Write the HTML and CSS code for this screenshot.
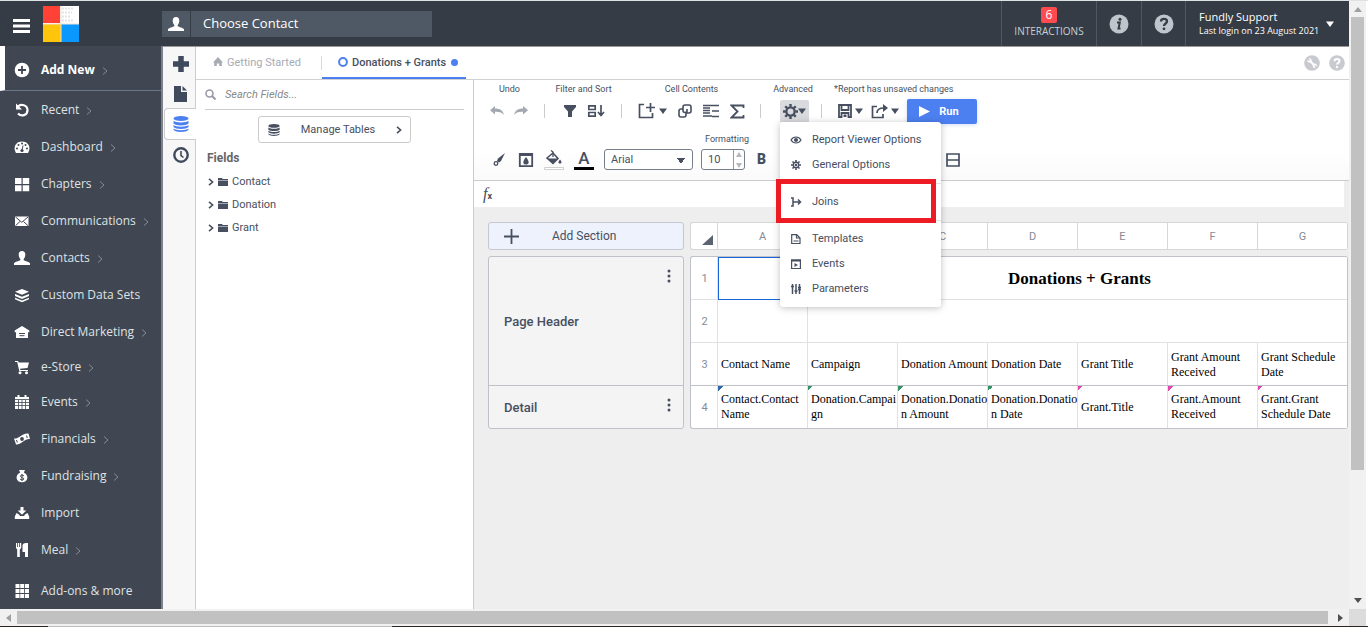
FILE: index.html
```html
<!DOCTYPE html>
<html lang="en">
<head>
<meta charset="utf-8">
<meta name="viewport" content="width=device-width, initial-scale=1">
<title>Donations + Grants</title>
<link rel="stylesheet" href="styles.css">
</head>
<body>
<svg class="sprite" aria-hidden="true">
  <symbol id="person" viewBox="0 0 16 14"><path d="M8 0c2.200 0 3.400 1.500 3.300 3.700C11.200 5.700 10.300 7.300 9.700 8v1.300c1.300.9 5.300 1.300 6.300 3V14H0v-1.700c1-1.700 5-2.100 6.300-3V8C5.700 7.300 4.800 5.700 4.700 3.700 4.600 1.500 5.800 0 8 0z"/></symbol>
  <symbol id="database" viewBox="0 0 16 16"><ellipse cx="8" cy="2.500" rx="7.500" ry="2.500"/><path d="M.5 4.800C3 7 13 7 15.500 4.800v2.700c-2 2.500-13 2.500-15 0zM.5 9C3 11.200 13 11.200 15.500 9v2c-2 2.500-13 2.500-15 0zM.5 12.600c2.500 2.200 12.500 2.200 15 0v1.100c-2 2.900-13 2.900-15 0z"/></symbol>
  <symbol id="chev" viewBox="0 0 6 8"><path d="M1 .8 4.600 4 1 7.200" fill="none" stroke="currentColor" stroke-width="1.600"/></symbol>
  <symbol id="thin" viewBox="0 0 6 8"><path d="M1 .5 5 4 1 7.500" fill="none" stroke="currentColor"/></symbol>
  <symbol id="caret" viewBox="0 0 8 6"><path d="M0 .5h8L4 6z"/></symbol>
  <symbol id="folder" viewBox="0 0 10 8"><path d="M0 0h4l.7 1H10v1H0zM0 2.600h10V8H0z"/></symbol>
  <symbol id="undo" viewBox="0 0 14 10"><path d="M5 0v2.500c5 0 8 2 9 6.500-2-3-5-3.500-9-3.300V8.500L0 4.200z"/></symbol>
  <symbol id="gear" viewBox="0 0 16 16"><circle cx="8" cy="8" r="4.400" fill="none" stroke="currentColor" stroke-width="2.400"/><path d="M8 0v3M8 13v3M0 8h3M13 8h3M2.400 2.400l2 2M11.600 11.600l2 2M2.400 13.600l2-2M11.600 4.400l2-2" stroke="currentColor" stroke-width="2.600"/></symbol>
  <symbol id="dots" viewBox="0 0 4 14"><circle cx="2" cy="2" r="1.500"/><circle cx="2" cy="7" r="1.500"/><circle cx="2" cy="12" r="1.500"/></symbol>
</svg>
<div class="window">
  <div class="viewport">
    <header class="topbar">
      <button class="plain burger" aria-label="Menu"><svg width="17" height="14"><path d="M0 1.500h17M0 7h17M0 12.500h17" stroke="#fff" stroke-width="3"/></svg></button>
      <a href="#" class="logo" aria-label="Home"><svg width="36" height="36"><rect width="36" height="36" fill="#fff"/><rect width="17" height="17" fill="#ff4136"/><rect y="18" width="18" height="18" fill="#ffc50a"/><rect x="18" y="18" width="18" height="18" fill="#0a98ff"/><path d="M19 2.500h12M19 6.500h10M19 10.500h8M19 14.500h12" stroke="#e4e4e4" stroke-width="2" stroke-dasharray="2 1"/><path d="M18 0v36M0 18h36" stroke="#f4dfcf"/></svg></a>
      <div class="chooser">
        <span class="chooser-icon"><svg width="16" height="14"><use href="#person"/></svg></span>
        <input type="text" placeholder="Choose Contact" aria-label="Choose Contact">
      </div>
      <a href="#" class="interactions"><span class="badge">6</span>INTERACTIONS</a>
      <button class="plain top-icon" aria-label="Information"><svg width="20" height="20" viewBox="0 0 20 20"><circle cx="10" cy="10" r="9.500" fill="#bfc5cc"/><circle cx="11" cy="5.200" r="1.500" fill="#353c45"/><path d="M8 8.500h2.800L9.500 14.500h2" fill="none" stroke="#353c45" stroke-width="2"/></svg></button>
      <button class="plain top-icon help" aria-label="Help"><svg width="20" height="20" viewBox="0 0 20 20"><circle cx="10" cy="10" r="9.500" fill="#bfc5cc"/><path d="M7 7.500C7 4 13 4 13 7.500c0 2-3 2-3 4.500" fill="none" stroke="#353c45" stroke-width="2.300"/><circle cx="10" cy="14.800" r="1.400" fill="#353c45"/></svg></button>
      <button class="plain account"><span>Fundly Support<small>Last login on 23 August 2021</small></span><svg width="8" height="6"><use href="#caret"/></svg></button>
    </header>
    <div class="body">
      <nav class="sidebar">
        <a href="#" class="add-new"><svg width="16" height="16" viewBox="0 0 16 16"><circle cx="8" cy="8" r="7.300"/><path d="M8 4v8M4 8h8" stroke="#404752" stroke-width="1.800"/></svg>Add New<svg class="more" width="6" height="8"><use href="#thin"/></svg></a>
        <a href="#"><svg width="16" height="16" viewBox="0 0 16 16"><path d="M4 4.500C7 1.500 13.500 3 13.500 8.300c0 5-6 6.700-9.500 3.200" fill="none" stroke="#fff" stroke-width="2.200"/><path d="M2 1.500v6h6z"/></svg>Recent<svg class="more" width="6" height="8"><use href="#thin"/></svg></a>
        <a href="#"><svg width="16" height="16" viewBox="0 0 16 16"><path d="M2 14C-1.500 8 2 2.500 8 2.500S17.500 8 14 14z"/><g fill="#404752"><circle cx="3" cy="9.500" r="1"/><circle cx="4.500" cy="6" r="1"/><circle cx="8" cy="4.500" r="1"/><circle cx="11.500" cy="6" r="1"/><circle cx="13" cy="9.500" r="1"/><circle cx="8" cy="11.500" r="1.600"/></g><path d="m8 11.500 1-5" stroke="#404752"/></svg>Dashboard<svg class="more" width="6" height="8"><use href="#thin"/></svg></a>
        <a href="#"><svg width="16" height="16" viewBox="0 0 16 16"><path d="M1 2h6.500v6H1zM8.700 2h6.500v6H8.700zM1 9.200h6.500v6H1zM8.700 9.200h6.500v6H8.700z"/></svg>Chapters<svg class="more" width="6" height="8"><use href="#thin"/></svg></a>
        <a href="#"><svg width="16" height="16" viewBox="0 0 16 16"><path d="M1 3.500h13.500v9.500H1z"/><path d="m1.500 4 6.300 5.300L14 4M1.500 12.700 6 8.500m8 4.200L9.500 8.500" fill="none" stroke="#404752"/></svg>Communications<svg class="more" width="6" height="8"><use href="#thin"/></svg></a>
        <a href="#"><svg width="16" height="14"><use href="#person"/></svg>Contacts<svg class="more" width="6" height="8"><use href="#thin"/></svg></a>
        <a href="#"><svg width="16" height="16" viewBox="0 0 16 16"><path d="m8 2 7 2.800-7 3-7-3zM1 7l7 2.800L15 7v2l-7 3-7-3zM1 10.700l7 2.800 7-2.800v1.500l-7 3-7-3z"/></svg>Custom Data Sets</a>
        <a href="#"><svg width="16" height="16" viewBox="0 0 16 16"><path d="m8 2 7.300 4.500v1.800H14V14H2V8.300H.7V6.500z"/><path d="M5 9.500h6M5.500 11.700h5" stroke="#404752"/></svg>Direct Marketing<svg class="more" width="6" height="8"><use href="#thin"/></svg></a>
        <a href="#" class="compact"><svg width="16" height="16" viewBox="0 0 16 16"><path d="M1 2h3l.7 1.500H15L13.500 9l-7.500.8.3 1.200H14v1H5.300L3.200 3H1z"/><circle cx="6" cy="13.800" r="1.500"/><circle cx="12.500" cy="13.800" r="1.500"/></svg>e-Store<svg class="more" width="6" height="8"><use href="#thin"/></svg></a>
        <a href="#"><svg width="16" height="16" viewBox="0 0 16 16"><path d="M1 3h2.500V1h2v2h5V1h2v2H15v12H1z"/><path d="M1 5.500h14M1 8.500h14M1 11.500h14M4.500 6v9M8 6v9M11.500 6v9" stroke="#404752" stroke-width=".8"/></svg>Events<svg class="more" width="6" height="8"><use href="#thin"/></svg></a>
        <a href="#"><svg width="16" height="16" viewBox="0 0 16 16"><path d="M0 7.500C5 8 9 1.500 14.500 2.500L16 8C10.500 7.500 7 14 2 13.500z"/><circle cx="8" cy="8" r="1.900" fill="#404752"/><path d="m2.500 9 .8 2.500M12.500 4.500l.8 2.500" stroke="#404752"/></svg>Financials<svg class="more" width="6" height="8"><use href="#thin"/></svg></a>
        <a href="#"><svg width="16" height="16" viewBox="0 0 16 16"><path d="M5 2h6L9.800 4.500c6 3 4 9.800-1.800 9.800S.200 7.500 6.200 4.500z"/><path d="M10 8C8.500 6.500 6 7 6.500 8.500S10 9.500 9.800 11 7 12 6 11M8 6v7" fill="none" stroke="#404752"/></svg>Fundraising<svg class="more" width="6" height="8"><use href="#thin"/></svg></a>
        <a href="#"><svg width="16" height="16" viewBox="0 0 16 16"><path d="M6.500 2h3v3.500h2.800L8 9.800 3.700 5.500h2.800zM2.500 8 5 9.500 6 11h4l1-1.500L13.500 8l1.700 3.500V14H.800v-2.500z"/></svg>Import</a>
        <a href="#"><svg width="16" height="16" viewBox="0 0 16 16"><path d="M2 1h1.200v4h.8V1h1.200v4H6V1h1.200v5L5.800 7.500V15H3.200V7.500L2 6zM8.500 3c1-2 2.500-2 5.500-2v14h-3v-5H8.500z"/></svg>Meal<svg class="more" width="6" height="8"><use href="#thin"/></svg></a>
        <a href="#" class="addons"><svg width="16" height="16" viewBox="0 0 16 16"><path d="M3.500 1v14M8.200 1v14M13 1v14" stroke="#fff" stroke-width="4" stroke-dasharray="4 1"/></svg>Add-ons &amp; more</a>
      </nav>
      <div class="rail">
        <button class="plain" aria-label="New"><svg width="16" height="16"><path d="M8 0v16M0 8h16" stroke="currentColor" stroke-width="5.500"/></svg></button>
        <button class="plain" aria-label="Reports"><svg width="13" height="16"><path d="M0 0h7v6h6v10H0z"/><path d="M8.500 0v4.500H13z"/></svg></button>
        <button class="plain active" aria-label="Data"><svg width="16" height="16"><use href="#database"/></svg></button>
        <button class="plain" aria-label="Schedule"><svg width="16" height="16"><circle cx="8" cy="8" r="6.700" fill="none" stroke="currentColor" stroke-width="2.400"/><path d="M8 4v4.500l2.500 2" fill="none" stroke="currentColor" stroke-width="1.600"/></svg></button>
      </div>
      <div class="app">
        <div class="tabs">
          <button class="plain tab started"><svg width="10" height="10"><path d="m5 0 5 5.500H8.800V9H6.200V6.500H3.800V9H1.200V5.500H0z"/></svg>Getting Started</button>
          <button class="plain tab current"><svg width="10" height="10"><circle cx="5" cy="5" r="3.900" fill="none" stroke="#4c7ff0" stroke-width="2"/></svg>Donations + Grants<span class="unsaved"></span></button>
          <div class="tab-tools">
            <button class="plain" aria-label="Settings"><svg width="16" height="16"><circle cx="8" cy="8" r="7.800"/><path d="m6 6 4.500 4.500" stroke="#fff" stroke-width="2"/><circle cx="5.500" cy="5.500" r="2.200" fill="#fff"/><circle cx="10.800" cy="10.800" r="2.200" fill="#fff"/><path d="M3 3l2.500 2.500M13 13l-2.200-2.200" stroke="#c8cad0" stroke-width="1.500"/></svg></button>
            <button class="plain" aria-label="Help"><svg width="16" height="16"><circle cx="8" cy="8" r="7.800"/><path d="M5.500 6.200c0-3 5-3 5 0 0 1.700-2.500 1.700-2.500 3.300" fill="none" stroke="#fff" stroke-width="2"/><circle cx="8" cy="12" r="1.200" fill="#fff"/></svg></button>
          </div>
        </div>
        <div class="workspace">
          <aside class="fields">
            <label class="search"><svg width="11" height="11"><circle cx="4.500" cy="4.500" r="3.500" fill="none" stroke="currentColor" stroke-width="1.600"/><path d="m7 7 3.500 3.500" stroke="currentColor" stroke-width="2"/></svg><input type="text" placeholder="Search Fields..." aria-label="Search Fields"></label>
            <button class="manage"><svg width="12" height="12"><use href="#database"/></svg><span>Manage Tables</span><svg width="6" height="8"><use href="#chev"/></svg></button>
            <h2>Fields</h2>
            <ul>
              <li><svg width="6" height="8"><use href="#chev"/></svg><svg width="10" height="8"><use href="#folder"/></svg>Contact</li>
              <li><svg width="6" height="8"><use href="#chev"/></svg><svg width="10" height="8"><use href="#folder"/></svg>Donation</li>
              <li><svg width="6" height="8"><use href="#chev"/></svg><svg width="10" height="8"><use href="#folder"/></svg>Grant</li>
            </ul>
          </aside>
          <main class="designer">
            <div class="toolbar">
              <div class="tools">
                <div class="group undo"><span>Undo</span><div class="icons">
                  <button class="plain" aria-label="Undo"><svg width="14" height="10"><use href="#undo"/></svg></button>
                  <button class="plain" aria-label="Redo"><svg width="14" height="10" viewBox="0 0 14 10"><path d="M9 0v2.500c-5 0-8 2-9 6.500 2-3 5-3.500 9-3.300V8.500l5-4.300z"/></svg></button>
                </div></div>
                <div class="group filter"><span>Filter and Sort</span><div class="icons">
                  <button class="plain" aria-label="Filter"><svg width="14" height="14"><path d="M1 1h12v2L9 7.500V13H5V7.500L1 3z"/></svg></button>
                  <button class="plain" aria-label="Sort"><svg width="18" height="14"><path d="M1.800 1.800h6.400v3.700H1.800zM1.800 8.500h6.400v3.700H1.800zM14 1v10m-3-3 3 3.500L17 8" fill="none" stroke="currentColor" stroke-width="1.700"/></svg></button>
                </div></div>
                <div class="group cell"><span>Cell Contents</span><div class="icons">
                  <button class="plain drop" aria-label="Insert"><svg width="18" height="16"><path d="M6 1.500H1.500v13h13V10M12.500 0v9M8 4.500h9" fill="none" stroke="currentColor" stroke-width="1.700"/></svg><svg width="8" height="6"><use href="#caret"/></svg></button>
                  <button class="plain" aria-label="Merge"><svg width="14" height="14"><path d="M5.500 5H3Q1 5 1 7v4q0 2 2 2h3q2 0 2-2V7.500M8.500 9H11q2 0 2-2V3q0-2-2-2H7Q5 1 5 3v3.500q0 2 2 2h2V5" fill="none" stroke="currentColor" stroke-width="1.600"/></svg></button>
                  <button class="plain" aria-label="Suppress"><svg width="16" height="14"><path d="M0 1.500h9M0 4h7M0 6.500h7M0 9h7M0 12h9M9 1.500h7M9 7h7M9 12.500h7" stroke="currentColor" stroke-width="1.600"/></svg></button>
                  <button class="plain" aria-label="Sum"><svg width="15" height="15"><path d="M13.500 4V1.500h-12l6 6-6 6h12V11" fill="none" stroke="currentColor" stroke-width="1.800"/></svg></button>
                </div></div>
                <div class="group advanced"><span>Advanced</span><div class="icons">
                  <button class="plain gear" aria-label="Advanced"><svg width="15" height="15"><use href="#gear"/></svg><svg width="8" height="6"><use href="#caret"/></svg></button>
                  <div class="menu" role="menu">
                    <button class="plain" role="menuitem"><svg width="12" height="12"><path d="M1 6c2.500-4 7.500-4 10 0-2.500 4-7.500 4-10 0z" fill="none" stroke="currentColor" stroke-width="1.200"/><circle cx="6" cy="6" r="2"/></svg>Report Viewer Options</button>
                    <button class="plain" role="menuitem"><svg width="10" height="10"><use href="#gear"/><circle cx="5" cy="5" r="1.200"/></svg>General Options</button>
                    <hr>
                    <button class="plain" role="menuitem"><svg width="12" height="12"><path d="M1 2h2v8H1M3 6h7M8 3.500 10.500 6 8 8.500" fill="none" stroke="currentColor" stroke-width="1.500"/></svg>Joins</button>
                    <hr>
                    <button class="plain" role="menuitem"><svg width="12" height="12"><path d="M1.700 1.700h5L10 5v5.500H1.700zM6.500 2v3H10M3.500 8h5" fill="none" stroke="currentColor" stroke-width="1.200"/></svg>Templates</button>
                    <button class="plain" role="menuitem"><svg width="12" height="12"><path d="M1.600 2h8.800v8.500H1.600z" fill="none" stroke="currentColor" stroke-width="1.200"/><path d="M1 1.500h10v2H1zM4.500 5v4L8 7z"/></svg>Events</button>
                    <button class="plain" role="menuitem"><svg width="12" height="12"><path d="M2.500 1v10M6 1v10M9.500 1v10M1 3.500h3M4.500 8h3M8 4.500h3M8 6.500h3" stroke="currentColor" stroke-width="1.500"/></svg>Parameters</button>
                    <div class="highlight"></div>
                  </div>
                </div></div>
                <div class="group file"><span>*Report has unsaved changes</span><div class="icons">
                  <button class="plain drop" aria-label="Save"><svg width="14" height="14"><path d="M1 13V1h12v12h-2.500V9h-7v4zM3.500 1v5h7V1" fill="none" stroke="currentColor" stroke-width="1.800"/><path d="M5.500 10.500h3V13h-3z"/></svg><svg width="8" height="6"><use href="#caret"/></svg></button>
                  <button class="plain drop" aria-label="Export"><svg width="17" height="15"><path d="M6 2.500H1.500v11H12V10M6 9c0-4 3-5 7-5" fill="none" stroke="currentColor" stroke-width="1.700"/><path d="m12 0 5 4-5 4z"/></svg><svg width="8" height="6"><use href="#caret"/></svg></button>
                  <button class="plain run"><svg width="11" height="11"><path d="M0 0l11 5.500L0 11z"/></svg>Run</button>
                </div></div>
              </div>
              <div class="formatting"><span>Formatting</span><div class="icons">
                <button class="plain" aria-label="Brush"><svg width="14" height="14"><path d="M13 0 6 5.500 5 8l2 1.500L9 8z"/><circle cx="4" cy="10.500" r="1.800" fill="none" stroke="currentColor" stroke-width="1.300"/><path d="M1 13.500 3 11.500"/></svg></button>
                <button class="plain" aria-label="Background"><svg width="16" height="16"><path d="M1.800 1.800h12.400v12.400H1.800z" fill="none" stroke="currentColor" stroke-width="1.800"/><path d="M1 1h14v3H1zM8 5c4 5 3 7.500 0 7.500S4 10 8 5z"/></svg></button>
                <button class="plain" aria-label="Fill colour"><svg width="20" height="20"><path d="m3 8 6-5 5 5.500-5 5z" fill="none" stroke="currentColor" stroke-width="1.600"/><path d="M3 8.500h11l-5 5zM16 9.500c2.500 3 1.500 4 0 4s-2.500-1 0-4z"/><path d="M9 7V2L7 .5" fill="none" stroke="currentColor" stroke-width="1.300"/><path d="M.5 17.500h19v2H.5z" fill="#fff" stroke="#d0d0d0"/></svg></button>
                <button class="plain letter" aria-label="Text colour">A</button>
                <select aria-label="Font"><option>Arial</option></select>
                <span class="stepper"><input type="text" value="10" aria-label="Font size"><svg width="8" height="18"><path d="M1 6h6L4 1zM1 12h6l-3 5z"/></svg></span>
                <button class="plain bold" aria-label="Bold">B</button>
                <button class="plain borders" aria-label="Borders"><svg width="14" height="14"><path d="M1 1h12v12H1zM1 7h12" fill="none" stroke="currentColor" stroke-width="1.700"/></svg></button>
              </div></div>
            </div>
            <div class="formula"><i>f</i><b>x</b></div>
            <div class="canvas">
              <button class="add-section"><svg width="15" height="15"><path d="M7.500 0v15M0 7.500h15" stroke="currentColor" stroke-width="1.800"/></svg><span>Add Section</span></button>
              <div class="columns"><span class="corner"><svg width="11" height="10"><path d="M11 0v10H0z"/></svg></span><span>A</span><span>B</span><span>C</span><span>D</span><span>E</span><span>F</span><span>G</span></div>
              <div class="sections">
                <div class="section page-header">Page Header<button class="plain" aria-label="Page Header options"><svg width="4" height="14"><use href="#dots"/></svg></button></div>
                <div class="section">Detail<button class="plain" aria-label="Detail options"><svg width="4" height="14"><use href="#dots"/></svg></button></div>
              </div>
              <div class="sheet"><table>
                <tr><th>1</th><td class="selected"></td><td colspan="6" class="title">Donations + Grants</td></tr>
                <tr><th>2</th><td></td><td colspan="6"></td></tr>
                <tr class="last"><th>3</th><td>Contact Name</td><td>Campaign</td><td class="tight">Donation Amount</td><td>Donation Date</td><td>Grant Title</td><td>Grant Amount Received</td><td>Grant Schedule Date</td></tr>
                <tr class="detail"><th>4</th><td class="blue">Contact.Contact Name</td><td class="green">Donation.Campaign</td><td class="green">Donation.Donation Amount</td><td class="green">Donation.Donation Date</td><td class="pink">Grant.Title</td><td class="pink">Grant.Amount Received</td><td class="pink">Grant.Grant Schedule Date</td></tr>
              </table></div>
            </div>
          </main>
        </div>
      </div>
    </div>
  </div>
  <div class="vbar"><svg width="8" height="5"><path d="M0 5h8L4 0z" fill="#a0a0a0"/></svg><div class="vthumb"></div><svg width="8" height="5"><path d="M0 0h8L4 5z"/></svg></div>
  <div class="hbar"><svg width="5" height="8"><path d="M5 0v8L0 4z" fill="#a0a0a0"/></svg><div class="hthumb"></div><svg width="5" height="8"><path d="M0 0v8l5-4z"/></svg></div>
  <div class="scroll-corner"></div>
</div>
</body>
</html>
```
FILE: styles.css
```css
* { box-sizing: border-box; }
body { margin: 0; font: 11px/15px Roboto, sans-serif; color: #474f60; background: #fff; }
svg { display: block; fill: currentColor; flex: none; }
a { color: inherit; text-decoration: none; }
input, button, select { font: inherit; color: inherit; }
.plain { border: 0; padding: 0; background: none; }
.sprite { display: none; }

.window { display: grid; grid-template: minmax(0, 1fr) 17px / minmax(0, 1fr) 17px; height: 100vh; padding: 0 2px 1px 0; border-top: 1px solid #dce3e2; background: linear-gradient(90deg, #2b2420 48px, #bbb 48px, #bbb 392px, #2b2420 392px) bottom / 100% 1px no-repeat; }
.viewport { display: flex; flex-direction: column; min-width: 0; min-height: 0; overflow: hidden; }

.topbar { display: flex; align-items: center; flex: none; height: 45px; background: #353c45; color: #fff; font-family: "Open Sans", sans-serif; }
.burger { width: 43px; padding: 4px 0 0 13px; }
.logo { width: 119px; }
.chooser { display: flex; gap: 1px; width: 270px; height: 26px; }
.chooser-icon { display: grid; place-items: center; width: 28px; background: #4e5965; }
.chooser input { flex: 1; min-width: 0; border: 0; padding: 0 12px; background: #4e5965; font-size: 13px; }
.chooser input::placeholder { color: #fff; opacity: 1; }
.interactions { display: flex; flex-direction: column; align-items: center; justify-content: center; width: 95px; height: 100%; margin-left: auto; border-left: 1px solid #4e5762; font-size: 10px; line-height: 17px; color: #c9ced4; }
.badge { width: 16px; height: 16px; border-radius: 2px; background: #ff4a4f; color: #fff; font-size: 12px; line-height: 16px; text-align: center; }
.top-icon { display: grid; place-items: center; width: 45px; height: 100%; border-left: 1px solid #4e5762; }
.help { width: 44px; }
.account { display: flex; align-items: center; justify-content: space-between; width: 164px; height: 100%; padding: 0 15px 0 13px; border-left: 1px solid #4e5762; text-align: left; line-height: 14px; white-space: nowrap; }
.account small { display: block; font-size: 9px; line-height: 13px; }

.body { display: flex; flex: 1; min-height: 0; }
.sidebar { display: flex; flex-direction: column; flex: none; width: 163px; border-right: 2px solid #7d828a; background: #404752; color: #dfe2e6; font: 12px/16px "Open Sans", sans-serif; }
.sidebar a { display: flex; align-items: center; flex: none; gap: 11px; height: 37px; padding-left: 14px; }
.sidebar svg { color: #fff; }
.sidebar .more { margin: 3px 0 0 -4px; color: #858c95; }
.sidebar .add-new { height: 45px; padding: 3px 0 0 9px; border-left: 5px solid #fff; border-bottom: 1px solid #68758b; color: #fff; font-weight: 700; }
.sidebar .compact { height: 33px; }
.sidebar .addons { margin-top: 4px; }

.rail { display: flex; flex-direction: column; flex: none; width: 33px; padding: 1px 0 0 1px; border-top: 1px solid #999; background: linear-gradient(#ccc, #ccc) right / 1px 100% no-repeat #f7f7f7; }
.rail button { display: grid; place-items: center; height: 31px; padding-left: 1px; color: #404a5d; }
.rail button:nth-child(2) { height: 29px; }
.rail .active { height: 32px; border: 1px solid #ccc; border-right: 0; border-radius: 4px 0 0 4px; background: #fff; color: #4c7ff0; }
.rail button:last-child { height: 29px; }

.app { display: flex; flex-direction: column; flex: 1; min-width: 0; border-top: 1px solid #999; }
.tabs { display: flex; flex: none; height: 33px; border-bottom: 1px solid #d0d1d4; }
.tab { display: flex; align-items: center; gap: 4px; }
.started { width: 126px; padding: 0 0 2px 17px; color: #a7abb3; background: linear-gradient(#d8d8d8, #d8d8d8) right 9px / 1px 14px no-repeat; }
.current { width: 144px; padding: 0 8px 0 16px; border-bottom: 2px solid #4c7ff0; font-weight: 500; white-space: nowrap; }
.unsaved { width: 7px; height: 7px; margin-left: auto; border-radius: 50%; background: #4c7ff0; }
.tab-tools { display: flex; align-items: center; gap: 9px; margin-left: auto; padding-right: 4px; color: #c8cad0; }

.workspace { display: flex; flex: 1; min-height: 0; }
.fields { display: flex; flex-direction: column; flex: none; width: 278px; padding: 0 9px; border-right: 1px solid #ccc; }
.search { display: flex; align-items: center; gap: 9px; height: 30px; border-bottom: 1px solid #ccc; color: #99a; }
.search input { flex: 1; border: 0; padding: 0; outline: 0; background: none; font-style: italic; }
.search input::placeholder { color: #888; opacity: 1; }
.manage { display: flex; align-items: center; justify-content: space-between; align-self: center; width: 153px; height: 27px; margin-top: 6px; padding: 0 8px 0 9px; border: 1px solid #ccc; border-radius: 3px; background: #fff; }
.fields h2 { margin: 8px 0 0 2px; font-size: 12px; line-height: 15px; font-weight: 700; color: #666; }
.fields ul { margin: 4px 0 0 3px; padding: 0; list-style: none; }
.fields li { display: flex; align-items: center; gap: 4px; height: 23px; }

.designer { display: flex; flex-direction: column; flex: 1; min-width: 0; background: #eee; }
.toolbar { flex: none; height: 101px; border-bottom: 1px solid #ccc; background: linear-gradient(#fff 70%, #fafafa); }
.tools { display: flex; }
.group > span, .formatting > span { display: block; height: 16px; font-size: 9px; line-height: 18px; text-align: center; white-space: nowrap; }
.icons { display: flex; align-items: center; justify-content: center; height: 30px; }
.group .icons { background: linear-gradient(#ccc, #ccc) right 8px / 1px 14px no-repeat; }
.undo { width: 71px; }
.undo .icons { gap: 10px; padding-right: 2px; color: #a3a8b1; }
.filter { width: 77px; }
.filter .icons { gap: 10px; }
.cell { width: 139px; }
.cell .icons { gap: 11px; }
.drop { display: flex; align-items: center; gap: 3px; }
.advanced { width: 61px; }
.advanced .icons { position: relative; justify-content: flex-start; padding-left: 19px; }
.advanced > span { padding-left: 3px; }
.gear { display: flex; align-items: center; justify-content: center; width: 29px; height: 22px; border-radius: 2px 2px 0 0; background: #d9dade; }
.file { padding-left: 12px; }
.file .icons { justify-content: flex-start; gap: 8px; padding-left: 4px; background: none; }
.file > span { text-align: left; }
.run { display: flex; align-items: center; justify-content: center; gap: 9px; width: 70px; height: 25px; padding-right: 6px; border-radius: 2px; background: #4c7ff0; color: #fff; font-weight: 700; box-shadow: 0 1px 4px #d5ddf0; }

.menu { position: absolute; z-index: 2; top: 26px; left: 19px; width: 161px; padding: 5px 0 6px; border-radius: 3px; background: #fff; box-shadow: 0 1px 7px rgba(0, 0, 0, .25); }
.menu button { display: grid; grid-template-columns: 12px 1fr; align-items: center; justify-items: start; gap: 10px; width: 100%; height: 25px; padding-left: 10px; white-space: nowrap; }
.menu svg { justify-self: center; }
.menu hr { margin: 6px 0 5px; border: 0; border-top: 1px solid #e2e2e2; }
.highlight { position: absolute; top: 57px; left: -4px; right: 5px; height: 44px; border: 5px solid #ed1c24; }

.formatting { width: 506px; padding-top: 4px; }
.formatting .icons { justify-content: flex-start; height: 27px; padding: 0 20px 0 18px; }
.formatting button { margin-right: 12px; }
.formatting button:nth-child(2) { margin-right: 10px; }
.formatting button:nth-child(3) { margin-right: 10px; }
.formatting .letter { width: 20px; height: 21px; margin-right: 10px; border-bottom: 3px solid #000; font-size: 17px; line-height: 17px; font-weight: 500; }
.formatting select { width: 89px; height: 21px; margin-right: 8px; padding: 0 6px; border: 1px solid #777f8d; border-radius: 3px; appearance: none; background: linear-gradient(to bottom right, #474f60 50%, transparent 50%) right 7px top 8px / 4px 6px no-repeat, linear-gradient(to bottom left, #474f60 50%, transparent 50%) right 11px top 8px / 4px 6px no-repeat, #fff; }
.stepper { display: flex; align-items: center; width: 44px; height: 21px; margin-right: 12px; border: 1px solid #777f8d; border-radius: 3px; background: #fff; }
.stepper input { width: 32px; height: 19px; border: 0; border-right: 1px solid #999; padding: 0 6px; background: none; }
.stepper svg { margin-left: 1px; color: #b5b7bb; }
.bold { font-size: 14px; font-weight: 900; }
.formatting .borders { margin: 0 0 0 auto; }
.formula { display: flex; align-items: center; flex: none; height: 26px; margin-right: 5px; padding-left: 9px; background: #fff; }
.formula i { font: italic 16px/20px "Liberation Serif", serif; }
.formula b { padding-top: 4px; font-size: 9px; }

.canvas { display: grid; grid-template-columns: 196px minmax(0, 1fr); grid-template-rows: 28px auto; gap: 6px; padding: 15px 1px 0 14px; }
.add-section { display: flex; align-items: center; padding: 0 15px; border: 1px solid #c5c8cf; border-radius: 3px; background: #eef2fd; font-size: 12px; }
.add-section span { padding-left: 33px; }
.columns { display: grid; grid-template-columns: 27px repeat(7, 1fr); overflow: hidden; border: 1px solid #d5d6d9; border-right: 0; border-radius: 3px; background: #fff; color: #858b97; }
.columns span { display: grid; place-items: center; border-right: 1px solid #d5d6d9; }
.columns .corner { place-items: end; padding: 0 4px 4px 0; color: #5b6270; }
.sections { display: flex; flex-direction: column; border: 1px solid #bfc2c9; border-radius: 3px; background: #f4f4f4; font-size: 13px; font-weight: 500; }
.section { position: relative; display: flex; align-items: center; flex: 1; padding-left: 15px; }
.section button { position: absolute; top: 12px; right: 12px; }
.page-header { flex: 0 0 129px; border-bottom: 1px solid #bfc2c9; }
.sheet { overflow: hidden; border: 1px solid #bfc2c9; border-right: 0; border-radius: 3px; background: #fff; }
.sheet table { width: 100%; table-layout: fixed; border-spacing: 0; font: 12px/15px "Liberation Serif", serif; color: #000; }
.sheet th, .sheet td { height: 43px; padding: 0 0 0 3px; box-shadow: inset -1px -1px #e0e1e3; overflow-wrap: anywhere; }
.sheet th { width: 27px; padding: 0; font: 11px Roboto, sans-serif; color: #858b97; }
.sheet td:last-child { box-shadow: inset -1px 0 #bfc2c9, inset 0 -1px #e0e1e3; }
.sheet .last > * { box-shadow: inset 0 -1px #bfc2c9, inset -1px 0 #e0e1e3; }
.sheet .last > :last-child { box-shadow: inset -1px -1px #bfc2c9; }
.sheet .detail > * { height: 42px; box-shadow: inset -1px 0 #e0e1e3; }
.sheet .detail > :last-child { box-shadow: inset -1px 0 #bfc2c9; }
.sheet .tight { white-space: nowrap; }
.sheet .title { font-size: 17px; font-weight: 700; text-align: center; }
.sheet .selected { box-shadow: inset 0 0 0 1px #1a66d9; }
.blue { background: linear-gradient(135deg, #2c68ac 50%, transparent 50%) 0 0 / 5px 5px no-repeat; }
.green { background: linear-gradient(135deg, #2f9461 50%, transparent 50%) 0 0 / 5px 5px no-repeat; }
.pink { background: linear-gradient(135deg, #e344ae 50%, transparent 50%) 0 0 / 5px 5px no-repeat; }

.vbar { display: flex; flex-direction: column; align-items: center; padding: 6px 0; background: #f1f1f1; color: #505050; }
.vthumb { width: 13px; height: 76%; margin: 5px 0 auto; background: #c1c1c1; }
.hbar { display: flex; align-items: center; padding: 0 6px; background: #f1f1f1; color: #505050; }
.hthumb { flex: 1; height: 13px; margin: 0 10px 0 6px; background: #c1c1c1; }
.scroll-corner { background: #dcdcdc; }
```
